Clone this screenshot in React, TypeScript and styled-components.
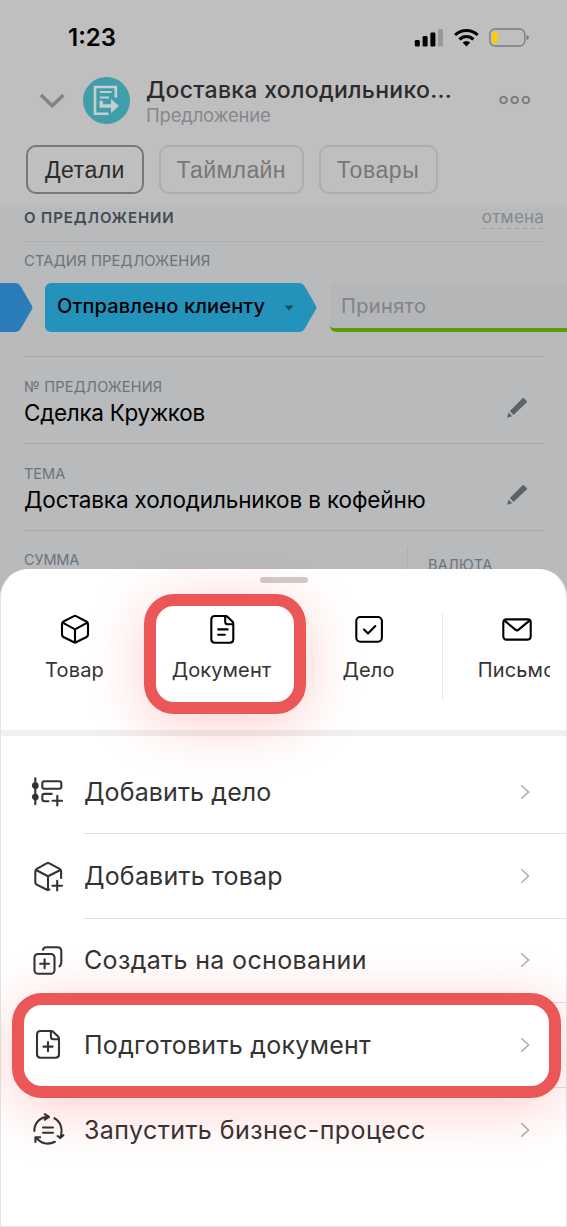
import React from "react";
import styled, { createGlobalStyle } from "styled-components";

const Global = createGlobalStyle`
  * { box-sizing: border-box; }
  html, body { margin: 0; padding: 0; background: #bfbfbf; }
  body { font-family: Inter, "Liberation Sans", sans-serif; }
`;

const Screen = styled.div`
  position: relative;
  width: 567px;
  height: 1227px;
  overflow: hidden;
  background: #bfbfbf;
`;

const Text = styled.span<{ $size: number; $weight?: number; $color: string; $ls?: number }>`
  font-size: ${(p) => p.$size}px;
  font-weight: ${(p) => p.$weight ?? 400};
  color: ${(p) => p.$color};
  letter-spacing: ${(p) => p.$ls ?? 0}px;
  white-space: nowrap;
`;

const StatusBar = styled.div`
  height: 76px;
  padding: 0 38px 0 68px;
  display: flex;
  align-items: center;
  justify-content: space-between;
  line-height: 26px;
`;

const StatusIcons = styled.svg`
  display: block;
`;

const Header = styled.header`
  height: 48px;
  padding: 0 36px 0 39px;
  display: flex;
  align-items: center;
`;

const Avatar = styled.div`
  width: 47px;
  height: 47px;
  margin: 0 16px 0 18px;
  border-radius: 50%;
  background: #409eaa;
  display: flex;
  align-items: center;
  justify-content: center;
`;

const Titles = styled.div`
  flex: 1;
  display: flex;
  flex-direction: column;
  line-height: 25px;
  margin-top: 6px;
`;

const Tabs = styled.nav`
  height: 81px;
  padding: 21px 26px 0;
  display: flex;
  gap: 15px;
`;

const Tab = styled.button<{ $w: number; $active?: boolean }>`
  width: ${(p) => p.$w}px;
  height: 49px;
  padding: 2px 0 0;
  border: 2px solid ${(p) => (p.$active ? "#787878" : "#adadad")};
  border-radius: 10px;
  background: transparent;
  font-family: "Liberation Sans", Arial, sans-serif;
`;

const Details = styled.main`
  height: 400px;
  background: #b8babc;
  display: flex;
  flex-direction: column;

  & > * {
    flex-shrink: 0;
  }
`;

const SectionHead = styled.div`
  height: 37px;
  margin: 0 23px 0 24px;
  padding-bottom: 11px;
  border-bottom: 1px solid #adafb1;
  display: flex;
  align-items: center;
  justify-content: space-between;
`;

const Cancel = styled.div`
  height: 22px;
  line-height: 20px;
  display: flex;
  flex-direction: column;
  background: repeating-linear-gradient(90deg, #a0a2a5 0 4px, transparent 4px 8.2px) 0 100% / 100% 1px no-repeat;
`;

const StageLabel = styled.div`
  height: 41px;
  padding: 8px 24px 0;
  line-height: 20px;
`;

const Stages = styled.div`
  height: 49px;
  margin-bottom: 24px;
  display: flex;
`;

const PastStage = styled.div`
  width: 13px;
  flex: none;
  background: #2a7db9;
`;

const CurrentStage = styled.div`
  width: 252px;
  flex: none;
  margin-left: 12px;
  padding: 0 3px 3px 12px;
  border-radius: 6px 0 0 6px;
  background: #2493bb;
  display: flex;
  align-items: center;
  justify-content: space-between;
`;

const Caret = styled.svg`
  display: block;
  margin-top: 4px;
`;

const NextStage = styled.div`
  flex: 1;
  margin-left: 13px;
  padding: 0 11px;
  border-radius: 6px 0 0 6px;
  border-bottom: 4.5px solid #5b9c02;
  background: #b4b6b8;
  display: flex;
  align-items: center;
`;

const Field = styled.div`
  height: 87px;
  margin: 0 23px 0 24px;
  padding: 20px 16px 0 0;
  border-top: 1px solid #a5a7a9;
  display: flex;
  justify-content: space-between;
`;

const FieldText = styled.div`
  display: flex;
  flex-direction: column;
  line-height: 20px;
  gap: 6px;
`;

const Pencil = styled.svg`
  display: block;
  margin-top: 20px;
`;

const Currency = styled.div`
  width: 137px;
  height: 30px;
  margin: -4px -16px 0 0;
  padding: 7px 0 0 20px;
  line-height: 20px;
  border-left: 1px solid #adafb1;
`;

const Sheet = styled.section`
  position: absolute;
  left: 0;
  right: 0;
  top: 569px;
  bottom: 0;
  border: 1px solid #e4e4e6;
  border-top-color: #fff;
  border-radius: 28px 28px 0 0;
  background: #fff;
`;

const Handle = styled.div`
  width: 48px;
  height: 6px;
  margin: 7px auto 0;
  border-radius: 3px;
  background: #cfcdce;
`;

const Quick = styled.div`
  height: 147px;
  padding-top: 30px;
  display: flex;
`;

const QuickItem = styled.div`
  position: relative;
  width: 147px;
  flex: none;
  display: flex;
  flex-direction: column;
  align-items: center;
  line-height: 24px;
  gap: 13px;
`;

const QuickMore = styled.div`
  width: 108px;
  height: 87px;
  border-left: 1px solid #ebebed;
  overflow: hidden;
`;

const Band = styled.div`
  height: 6px;
  background: #efefef;
`;

const Rows = styled.div`
  padding-top: 14px;
`;

const Row = styled.div`
  position: relative;
  height: 84.4px;
  padding-left: 30px;
  display: flex;
  align-items: center;
  gap: 19px;
`;

const RowBody = styled.div<{ $last?: boolean }>`
  flex: 1;
  height: 100%;
  padding-right: 36px;
  border-bottom: ${(p) => (p.$last ? "none" : "1.5px solid #dfdfe0")};
  display: flex;
  align-items: center;
  justify-content: space-between;
`;

const Highlight = styled.div<{ $x: number; $y: number; $w: number; $h: number }>`
  position: absolute;
  z-index: 1;
  left: ${(p) => p.$x}px;
  top: ${(p) => p.$y}px;
  width: ${(p) => p.$w}px;
  height: ${(p) => p.$h}px;
  border: 12px solid #eb5757;
  border-radius: 30px;
  box-shadow: 0 10px 60px rgba(255, 0, 0, 0.2);
  pointer-events: none;
`;

const Icon = styled.svg<{ $color?: string }>`
  display: block;
  flex: none;
  fill: none;
  stroke: ${(p) => p.$color ?? "#333"};
  stroke-width: 2.1;
  stroke-linecap: round;
  stroke-linejoin: round;
`;

const Tip = ({ color }: { color: string }) => (
  <svg width="20" height="49" viewBox="0 0 20 49">
    <path d="M0 0H2Q5.5 0 7.5 3L18.8 22.5Q20 24.5 18.8 26.5L7.5 46Q5.5 49 2 49H0Z" fill={color} />
  </svg>
);

const PencilIcon = () => (
  <Pencil width="22" height="22" viewBox="0 0 22 22">
    <path d="M16.6 1.2Q17.2.7 17.8 1.2L20.8 4.2Q21.3 4.8 20.8 5.3L7.6 18L3.9 14.1Z" fill="#5a636b" />
    <path d="M2.7 15.6L6.2 19.2L1 20.8Z" fill="#5a636b" />
  </Pencil>
);

const CubePath = () => (
  <path d="M15 3.1Q16 2.6 17 3.1L27.5 8.5Q29 9.3 29 11V21.6Q29 23.2 27.6 24L17 29.3Q16 29.9 15 29.3L4.4 24Q3 23.2 3 21.6V11Q3 9.3 4.5 8.5ZM3.6 9.6L16 16.3L28.4 9.6M16 16.3V29.4" />
);

const DocPath = () => (
  <path d="M8.8 3H19.6Q20.8 3 21.7 3.9L26.4 8.6Q27.3 9.5 27.3 10.7V26.2Q27.3 29.7 23.8 29.7H8.8Q5.3 29.7 5.3 26.2V6.5Q5.3 3 8.8 3ZM19.2 3.2V8.8Q19.2 11.3 21.7 11.3H27" />
);

const rows = [
  {
    label: "Добавить дело",
    ls: 0.12,
    icon: (
      <>
        <path d="M4.3 3.2V29.2" />
        <circle cx="4.3" cy="10.7" r="2.3" fill="#333" />
        <circle cx="4.3" cy="22" r="2.3" fill="#333" />
        <rect x="11.3" y="6.3" width="19" height="7.4" rx="2" />
        <path d="M20.7 18.9H13.5Q11.3 18.9 11.3 21.1V24Q11.3 26.2 13.5 26.2H17.5M26.3 20.9V30.4M21.5 25.7H31.1" />
      </>
    ),
  },
  {
    label: "Добавить товар",
    ls: 0.2,
    icon: (
      <path d="M30.1 18V11.4Q30.1 9.7 28.6 8.9L18 3.2Q17 2.7 16 3.2L5.8 8.9Q4.3 9.7 4.3 11.4V22.2Q4.3 23.8 5.7 24.6L16 29.7Q17 30.2 18.4 29.6M5 10L17 16.3L29.4 10M17 16.3V29.6M26.2 20.9V30.4M21.4 25.7H31" />
    ),
  },
  {
    label: "Создать на основании",
    ls: 0.35,
    icon: (
      <>
        <rect x="3.5" y="10" width="20" height="19.8" rx="3.6" />
        <path d="M13.6 15.4V24.2M9.2 19.8H18M12 5.8Q12.3 3.2 15.4 3.2H26.2Q30.3 3.2 30.3 7.3V17.8Q30.3 21 28.6 22.3" />
      </>
    ),
  },
  {
    label: "Подготовить документ",
    ls: 0.28,
    icon: (
      <g transform="translate(0.7 0)">
        <DocPath />
        <path d="M16.3 14V23.2M11.7 18.6H20.9" />
      </g>
    ),
  },
  {
    label: "Запустить бизнес-процесс",
    ls: 0.42,
    icon: (
      <path d="M3.4 18C3.2 10 9 4 17 3.9M13.8 1.2L18 3.9L13.8 6.7M23.4 5.3C29.6 8.6 32.2 16.2 29.5 24M26.6 23L29.3 25L32.3 22.2M5.2 24.6C9.5 30.4 17 32.4 23.8 28.8M4.4 29V24.2H9.2M12 14.5H22M12 19.8H22" />
    ),
  },
];

export default function App() {
  return (
    <Screen>
      <Global />
      <StatusBar>
        <Text $size={24} $weight={600} $color="#000">1:23</Text>
        <StatusIcons width="115" height="20" viewBox="0 0 115 20">
          <g fill="#000">
            <rect x="0.8" y="12" width="5" height="6.5" rx="1.3" />
            <rect x="8.6" y="8" width="5" height="10.5" rx="1.3" />
            <rect x="16.4" y="4.4" width="5" height="14.1" rx="1.3" />
            <rect x="24" y="1" width="5" height="17.5" rx="1.3" fill="#999" />
          </g>
          <g fill="none" stroke="#000" strokeWidth="3">
            <path d="M41.1 7C47.6 0.9 57.2 0.9 63.7 7" />
            <path d="M45.4 11.4C49.4 7.5 55.4 7.5 59.4 11.4" />
          </g>
          <path d="M48.6 14.6Q52.4 11.6 56.2 14.6L52.4 18.4Z" fill="#000" />
          <rect x="75.8" y="1" width="35" height="17" rx="5.2" fill="none" stroke="#7c7c7c" strokeWidth="1.3" />
          <rect x="78" y="3.5" width="5.4" height="12" rx="2.4" fill="#ffcc00" />
          <path d="M112.4 6.7Q115 7.7 115 9.5Q115 11.3 112.4 12.3Z" fill="#7c7c7c" />
        </StatusIcons>
      </StatusBar>
      <Header>
        <svg width="26" height="18" viewBox="0 0 26 18">
          <path d="M2 4L13.2 14.7L24.4 4" fill="none" stroke="#80838a" strokeWidth="3.6" />
        </svg>
        <Avatar>
          <svg width="27" height="31" viewBox="0 0 27 31">
            <path d="M22.8 12.5V2H2V28.7H15.5" fill="none" stroke="#c6cdce" strokeWidth="2.6" />
            <path d="M6.8 7H18.6M6.8 12.4H16" fill="none" stroke="#c6cdce" strokeWidth="2" />
            <path d="M8.2 15.8V21H19" fill="none" stroke="#c6cdce" strokeWidth="3.4" />
            <path d="M18 14L26 21L18 28Z" fill="#c6cdce" />
          </svg>
        </Avatar>
        <Titles>
          <Text $size={23} $weight={500} $color="#2b2b2b" $ls={0.3}>Доставка холодильнико...</Text>
          <Text $size={18.5} $color="#85888e" $ls={-0.2}>Предложение</Text>
        </Titles>
        <svg width="32" height="10" viewBox="0 0 32 10" fill="none" stroke="#7b7d80" strokeWidth="2">
          <circle cx="4.5" cy="5" r="3.3" />
          <circle cx="15.7" cy="5" r="3.3" />
          <circle cx="26.9" cy="5" r="3.3" />
        </svg>
      </Header>
      <Tabs>
        <Tab $w={118} $active>
          <Text $size={23} $color="#2b2b2b" $ls={0.5}>Детали</Text>
        </Tab>
        <Tab $w={144.5}>
          <Text $size={23} $color="#777" $ls={0.4}>Таймлайн</Text>
        </Tab>
        <Tab $w={119}>
          <Text $size={23} $color="#777" $ls={0.6}>Товары</Text>
        </Tab>
      </Tabs>
      <Details>
        <SectionHead>
          <Text $size={15} $weight={600} $color="#424a54" $ls={0.9}>О ПРЕДЛОЖЕНИИ</Text>
          <Cancel>
            <Text $size={17} $color="#85888d" $ls={0.2}>отмена</Text>
          </Cancel>
        </SectionHead>
        <StageLabel>
          <Text $size={14.8} $color="#6b737b" $ls={0.1}>СТАДИЯ ПРЕДЛОЖЕНИЯ</Text>
        </StageLabel>
        <Stages>
          <PastStage />
          <Tip color="#2a7db9" />
          <CurrentStage>
            <Text $size={20} $weight={500} $color="#000" $ls={0.15}>Отправлено клиенту</Text>
            <Caret width="10" height="6" viewBox="0 0 10 6">
              <path d="M0.5 0.5H9.5L5 5.5Z" fill="#155066" />
            </Caret>
          </CurrentStage>
          <Tip color="#2493bb" />
          <NextStage>
            <Text $size={20} $color="#808389" $ls={0.35}>Принято</Text>
          </NextStage>
        </Stages>
        <Field>
          <FieldText>
            <Text $size={14.5} $color="#6b737b" $ls={0.2}>№ ПРЕДЛОЖЕНИЯ</Text>
            <Text $size={22.5} $color="#000" $ls={-0.3}>Сделка Кружков</Text>
          </FieldText>
          <PencilIcon />
        </Field>
        <Field>
          <FieldText>
            <Text $size={14.5} $color="#6b737b" $ls={0}>ТЕМА</Text>
            <Text $size={22.5} $color="#000" $ls={-0.13}>Доставка холодильников в кофейню</Text>
          </FieldText>
          <PencilIcon />
        </Field>
        <Field>
          <Text $size={14.5} $color="#6b737b" $ls={-0.15}>СУММА</Text>
          <Currency>
            <Text $size={14.5} $color="#6b737b" $ls={0.2}>ВАЛЮТА</Text>
          </Currency>
        </Field>
      </Details>
      <Sheet>
        <Handle />
        <Quick>
          <QuickItem>
            <Icon width="32" height="32" viewBox="0 0 32 32" $color="#000"><CubePath /></Icon>
            <Text $size={20} $color="#333" $ls={0.15}>Товар</Text>
          </QuickItem>
          <QuickItem>
            <Icon width="32" height="32" viewBox="0 0 32 32" $color="#000">
              <DocPath />
              <path d="M12.2 16.4H21.6M12.2 21.8H18.8" />
            </Icon>
            <Text $size={20} $color="#333" $ls={0.1}>Документ</Text>
            <Highlight $x={-4} $y={-19} $w={162} $h={120} />
          </QuickItem>
          <QuickItem>
            <Icon width="32" height="32" viewBox="0 0 32 32" $color="#000">
              <rect x="3.3" y="4" width="25.6" height="24.8" rx="4" />
              <path d="M11 16.4L15 20.4L22.3 13" />
            </Icon>
            <Text $size={20} $color="#333" $ls={0.15}>Дело</Text>
          </QuickItem>
          <QuickMore>
            <QuickItem>
              <Icon width="32" height="32" viewBox="0 0 32 32" $color="#000">
                <rect x="2.3" y="6.4" width="27.4" height="20.2" rx="3" />
                <path d="M3.2 7.4L14.7 16.9Q16 18 17.3 16.9L28.8 7.4" />
              </Icon>
              <Text $size={20} $color="#333" $ls={0.15}>Письмо</Text>
            </QuickItem>
          </QuickMore>
        </Quick>
        <Band />
        <Rows>
          {rows.map((r, i) => (
            <Row key={r.label}>
              <Icon width="34" height="34" viewBox="0 0 34 34">{r.icon}</Icon>
              <RowBody $last={i === rows.length - 1}>
                <Text $size={25} $color="#333" $ls={r.ls}>{r.label}</Text>
                <svg width="10" height="16" viewBox="0 0 10 16">
                  <path d="M1.2 1.2L8.6 8L1.2 14.8" fill="none" stroke="#a8a8a8" strokeWidth="1.4" />
                </svg>
              </RowBody>
              {i === 3 && <Highlight $x={11} $y={-10} $w={549} $h={105} />}
            </Row>
          ))}
        </Rows>
      </Sheet>
    </Screen>
  );
}
